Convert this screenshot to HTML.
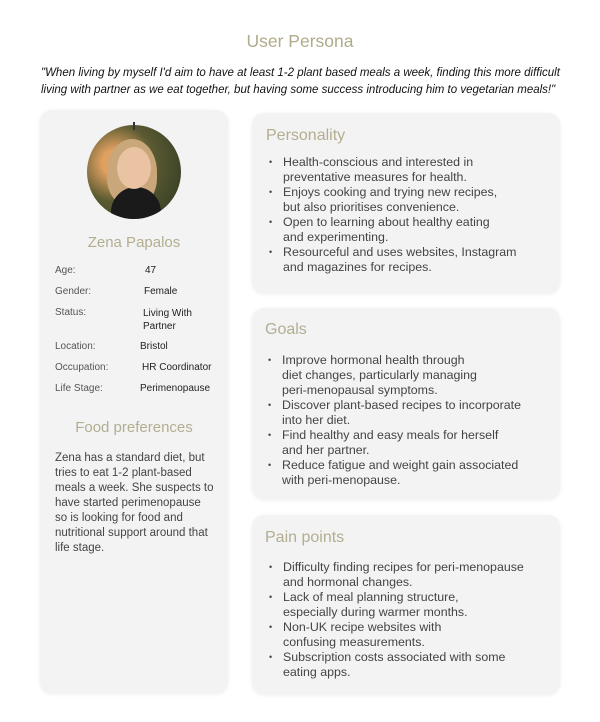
<!DOCTYPE html>
<html><head><style>
body{margin:0;width:600px;height:722px;background:#fff;font-family:"Liberation Sans",sans-serif;position:relative;overflow:hidden}
.a{position:absolute;white-space:nowrap}
.card{position:absolute;background:#f3f3f3;border-radius:12px;box-shadow:0 1px 4px rgba(0,0,0,0.08)}
.h{color:#b3ae91;font-size:16px}
ul{position:absolute;margin:0;padding:0;list-style:none;font-size:12.4px;line-height:15px;color:#444}
ul li{position:relative;padding-left:16px}
ul li:before{content:"•";position:absolute;left:2px;font-size:9px}
.lab{font-size:10px;color:#555}
.val{font-size:10px;color:#222}
</style></head><body>
<div class="a" style="left:0;width:600px;text-align:center;top:31px;font-size:17.5px;color:#b0ab8a">User Persona</div>
<div class="a" style="left:41px;top:65px;font-size:11.5px;font-style:italic;color:#111;line-height:17px">"When living by myself I'd aim to have at least 1-2 plant based meals a week, finding this more difficult<br>living with partner as we eat together, but having some success introducing him to vegetarian meals!"</div>

<div class="card" style="left:40px;top:110px;width:188px;height:583px"></div>
<div class="a" style="left:87px;top:125px;width:94px;height:94px;border-radius:50%;overflow:hidden;background:radial-gradient(circle at 30% 40%,#e0a060 0 15%,#5a5a32 45%,#2a3520 100%)">
<div class="a" style="left:20px;top:14px;width:50px;height:66px;border-radius:50% 50% 40% 40%;background:#c9a77a"></div>
<div class="a" style="left:24px;top:62px;width:50px;height:40px;border-radius:25px 25px 0 0;background:#1a1a1a"></div>
<div class="a" style="left:30px;top:22px;width:34px;height:42px;border-radius:50%;background:#e9c3a2"></div>
</div>
<div class="a" style="left:133px;top:122px;width:2px;height:8px;background:#333"></div>
<div class="a h" style="left:40px;width:188px;text-align:center;top:234px;font-size:15px">Zena Papalos</div>
<div class="a lab" style="left:55px;top:265px">Age:</div><div class="a val" style="left:145px;top:265px">47</div>
<div class="a lab" style="left:55px;top:286px">Gender:</div><div class="a val" style="left:144px;top:286px">Female</div>
<div class="a lab" style="left:55px;top:307px">Status:</div><div class="a val" style="left:143px;top:307px;line-height:13px">Living With<br>Partner</div>
<div class="a lab" style="left:55px;top:341px">Location:</div><div class="a val" style="left:140px;top:341px">Bristol</div>
<div class="a lab" style="left:55px;top:362px">Occupation:</div><div class="a val" style="left:142px;top:362px">HR Coordinator</div>
<div class="a lab" style="left:55px;top:383px">Life Stage:</div><div class="a val" style="left:140px;top:383px">Perimenopause</div>
<div class="a h" style="left:40px;width:188px;text-align:center;top:419px;font-size:15px">Food preferences</div>
<div class="a" style="left:55px;top:451px;font-size:11.5px;line-height:15px;color:#444">Zena has a standard diet, but<br>tries to eat 1-2 plant-based<br>meals a week. She suspects to<br>have started perimenopause<br>so is looking for food and<br>nutritional support around that<br>life stage.</div>

<div class="card" style="left:252px;top:113px;width:308px;height:180px"></div>
<div class="a h" style="left:266px;top:127px">Personality</div>
<ul style="left:267px;top:155px"><li>Health-conscious and interested in<br>preventative measures for health.</li><li>Enjoys cooking and trying new recipes,<br>but also prioritises convenience.</li><li>Open to learning about healthy eating<br>and experimenting.</li><li>Resourceful and uses websites, Instagram<br>and magazines for recipes.</li></ul>

<div class="card" style="left:252px;top:308px;width:308px;height:191px"></div>
<div class="a h" style="left:265px;top:321px">Goals</div>
<ul style="left:266px;top:353px"><li>Improve hormonal health through<br>diet changes, particularly managing<br>peri-menopausal symptoms.</li><li>Discover plant-based recipes to incorporate<br>into her diet.</li><li>Find healthy and easy meals for herself<br>and her partner.</li><li>Reduce fatigue and weight gain associated<br>with peri-menopause.</li></ul>

<div class="card" style="left:252px;top:515px;width:308px;height:179px"></div>
<div class="a h" style="left:265px;top:529px">Pain points</div>
<ul style="left:267px;top:560px"><li>Difficulty finding recipes for peri-menopause<br>and hormonal changes.</li><li>Lack of meal planning structure,<br>especially during warmer months.</li><li>Non-UK recipe websites with<br>confusing measurements.</li><li>Subscription costs associated with some<br>eating apps.</li></ul>
</body></html>
